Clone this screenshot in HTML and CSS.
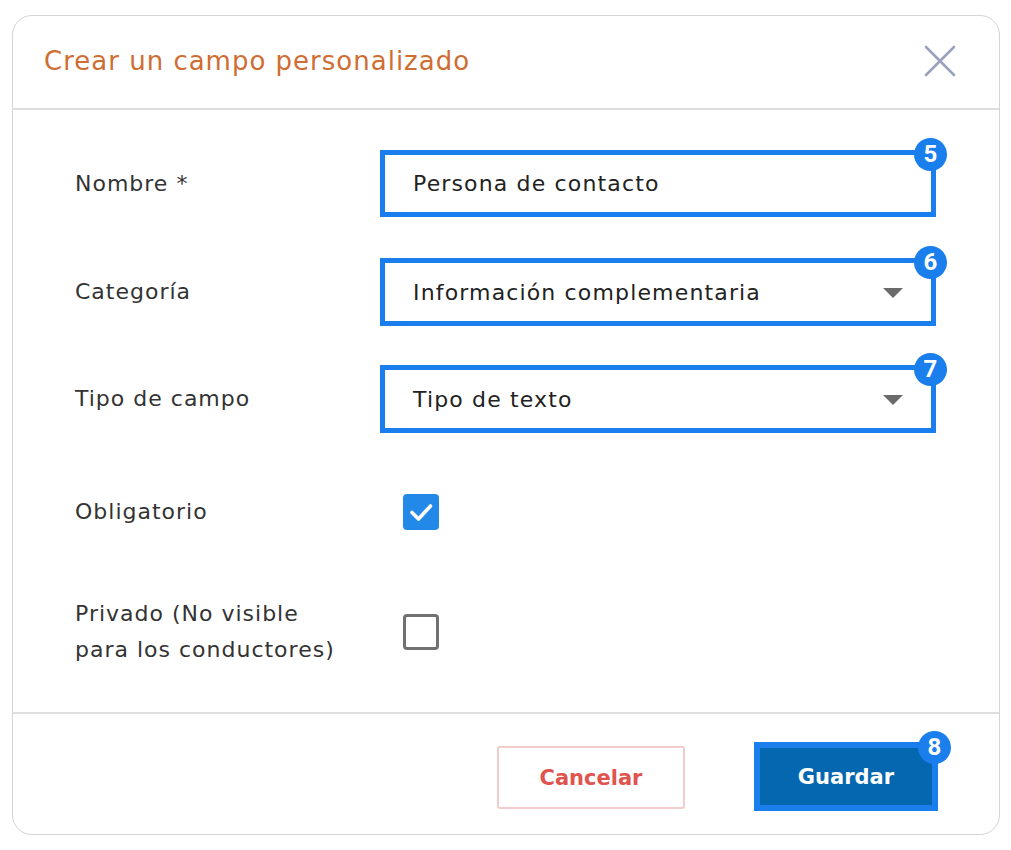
FILE: index.html
```html
<!DOCTYPE html>
<html lang="es">
<head>
<meta charset="utf-8">
<title>Crear un campo personalizado</title>
<link rel="stylesheet" href="styles.css">
</head>
<body>
<div class="modal">
  <header class="modal-header">
    <h1 class="modal-title">Crear un campo personalizado</h1>
    <button class="close-btn" aria-label="Cerrar">
      <svg width="32" height="32" viewBox="0 0 32 32"><path d="M2 2 L30 30 M30 2 L2 30" stroke="#9ba2c0" stroke-width="2.6" stroke-linecap="round" fill="none"/></svg>
    </button>
  </header>
  <div class="modal-body">
    <div class="row row-input r1">
      <label class="label">Nombre *</label>
      <div class="field">
        <span class="field-text">Persona de contacto</span>
        <span class="badge">5</span>
      </div>
    </div>
    <div class="row row-input r2">
      <label class="label">Categoría</label>
      <div class="field">
        <span class="field-text">Información complementaria</span>
        <span class="caret"></span>
        <span class="badge">6</span>
      </div>
    </div>
    <div class="row row-input r3">
      <label class="label">Tipo de campo</label>
      <div class="field">
        <span class="field-text">Tipo de texto</span>
        <span class="caret"></span>
        <span class="badge">7</span>
      </div>
    </div>
    <div class="row r4">
      <label class="label">Obligatorio</label>
      <span class="checkbox checked">
        <svg width="36" height="36" viewBox="0 0 36 36"><path d="M9 18.5 L15.5 25 L27.5 12" stroke="#fff" stroke-width="3.6" stroke-linecap="round" stroke-linejoin="round" fill="none"/></svg>
      </span>
    </div>
    <div class="row r5">
      <label class="label">Privado (No visible<br>para los conductores)</label>
      <span class="checkbox"></span>
    </div>
  </div>
  <footer class="modal-footer">
    <button class="btn btn-cancel">Cancelar</button>
    <button class="btn btn-save">Guardar<span class="badge">8</span></button>
  </footer>
</div>
</body>
</html>
```
FILE: styles.css
```css
* { box-sizing: border-box; }
html, body { margin: 0; padding: 0; background: #fff; }
body {
  font-family: "DejaVu Sans", "Open Sans", sans-serif;
  color: #333;
}
.modal {
  margin: 15px 0 0 12px;
  width: 988px;
  height: 820px;
  border: 1px solid #d4d4d4;
  border-radius: 20px;
  display: flex;
  flex-direction: column;
}
.modal-header {
  height: 94px;
  border-bottom: 2px solid #dedede;
  display: flex;
  align-items: center;
  justify-content: space-between;
  padding: 0 43px 0 31px;
  flex: none;
}
.modal-title {
  margin: 0 0 3px 0;
  font-weight: 400;
  font-size: 26px;
  letter-spacing: 1px;
  color: #cf6d33;
}
.close-btn {
  background: none;
  border: 0;
  padding: 0;
  width: 32px;
  height: 32px;
  margin-bottom: 3px;
  display: flex;
}
.modal-body {
  flex: 1;
  padding: 40px 0 0 62px;
  display: flex;
  flex-direction: column;
}
.row {
  display: flex;
  align-items: center;
}
.label {
  width: 305px;
  font-size: 22px;
  letter-spacing: 1px;
  line-height: 36px;
  color: #333;
  flex: none;
}
.row-input { height: 67px; }
.r2 { margin-top: 41px; height: 68px; }
.r3 { margin-top: 39px; height: 68px; }
.r4 { margin-top: 40px; height: 78px; }
.r5 { margin-top: 40px; height: 82px; }
.field {
  position: relative;
  width: 556px;
  height: 100%;
  border: 5px solid #1a7fec;
  display: flex;
  align-items: center;
  padding: 0 28px 0 28px;
}
.field-text {
  flex: 1;
  font-size: 22px;
  letter-spacing: 1.15px;
  color: #222;
}
.caret {
  width: 0;
  height: 0;
  border-left: 10px solid transparent;
  border-right: 10px solid transparent;
  border-top: 10px solid #6b6b6b;
  margin-top: 2px;
}
.badge {
  position: absolute;
  top: -17px;
  right: -16px;
  width: 33px;
  height: 33px;
  border-radius: 50%;
  background: #1a7fec;
  color: #fff;
  font-family: "Liberation Sans Narrow", "Roboto", sans-serif;
  font-weight: 700;
  font-size: 24px;
  line-height: 33px;
  text-align: center;
  letter-spacing: 0;
}
.checkbox {
  margin-left: 23px;
  width: 36px;
  height: 36px;
  border-radius: 4px;
  border: 3px solid #717171;
  display: block;
}
.checkbox.checked {
  background: #2389e9;
  border: 0;
}
.checkbox svg { display: block; }
.modal-footer {
  flex: none;
  height: 122px;
  border-top: 2px solid #dedede;
  display: flex;
  align-items: flex-start;
  justify-content: flex-end;
  padding: 28px 61px 0 0;
  gap: 69px;
}
.btn {
  font-family: "DejaVu Sans", sans-serif;
  font-weight: 700;
  font-size: 21px;
  border-radius: 3px;
  cursor: pointer;
}
.btn-cancel {
  margin-top: 4px;
  width: 188px;
  height: 63px;
  background: #fff;
  border: 2px solid #f1cccb;
  color: #e0544f;
}
.btn-save {
  position: relative;
  width: 184px;
  height: 69px;
  background: #0567b0;
  border: 6px solid #1a7fec;
  border-radius: 0;
  color: #fff;
}
.btn-save .badge { top: -17px; right: -19px; }
```
